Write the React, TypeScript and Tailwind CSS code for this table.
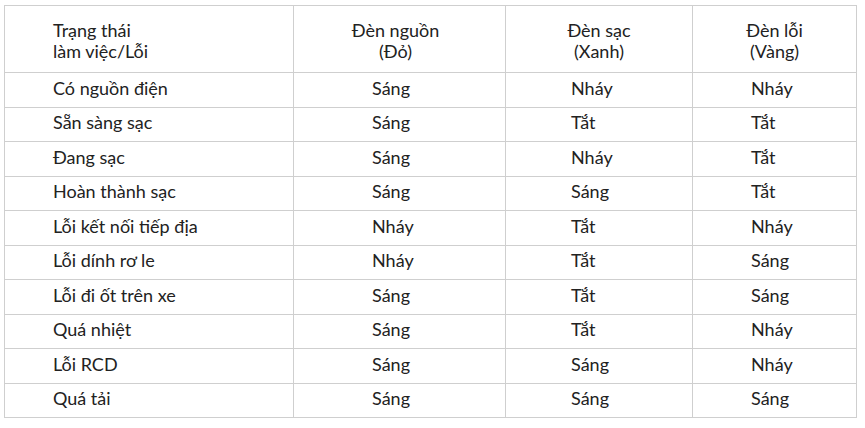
const rows: [string, string, string, string][] = [
  ['Có nguồn điện', 'Sáng', 'Nháy', 'Nháy'],
  ['Sẵn sàng sạc', 'Sáng', 'Tắt', 'Tắt'],
  ['Đang sạc', 'Sáng', 'Nháy', 'Tắt'],
  ['Hoàn thành sạc', 'Sáng', 'Sáng', 'Tắt'],
  ['Lỗi kết nối tiếp địa', 'Nháy', 'Tắt', 'Nháy'],
  ['Lỗi dính rơ le', 'Nháy', 'Tắt', 'Sáng'],
  ['Lỗi đi ốt trên xe', 'Sáng', 'Tắt', 'Sáng'],
  ['Quá nhiệt', 'Sáng', 'Tắt', 'Nháy'],
  ['Lỗi RCD', 'Sáng', 'Sáng', 'Nháy'],
  ['Quá tải', 'Sáng', 'Sáng', 'Sáng'],
];

export default function App() {
  return (
    <div className="w-[865px] h-[428px] bg-white pt-[5px] pl-[4px] font-['Lato',sans-serif] text-[18px] text-[#222]">
      <table className="table-fixed border-collapse w-[852px]">
        <colgroup>
          <col className="w-[289px]" />
          <col className="w-[212px]" />
          <col className="w-[187px]" />
          <col className="w-[164px]" />
        </colgroup>
        <thead>
          <tr className="h-[67px]">
            <th className="border border-[#cfcfcf] font-normal text-left leading-[21px] pl-[48px] pt-[4px]">
              Trạng thái
              <br />
              làm việc/Lỗi
            </th>
            <th className="border border-[#cfcfcf] font-normal text-center leading-[21px] pr-[8px] pt-[4px]">
              Đèn nguồn
              <br />
              (Đỏ)
            </th>
            <th className="border border-[#cfcfcf] font-normal text-center leading-[21px] pt-[4px]">
              Đèn sạc
              <br />
              (Xanh)
            </th>
            <th className="border border-[#cfcfcf] font-normal text-center leading-[21px] pt-[4px]">
              Đèn lỗi
              <br />
              (Vàng)
            </th>
          </tr>
        </thead>
        <tbody>
          {rows.map((r) => (
            <tr key={r[0]} className="h-[34.5px]">
              <td className="border border-[#cfcfcf] pl-[48px] pb-[4px] leading-[22px]">{r[0]}</td>
              <td className="border border-[#cfcfcf] pl-[78px] pb-[4px] leading-[22px]">{r[1]}</td>
              <td className="border border-[#cfcfcf] pl-[65px] pb-[4px] leading-[22px]">{r[2]}</td>
              <td className="border border-[#cfcfcf] pl-[58px] pb-[4px] leading-[22px]">{r[3]}</td>
            </tr>
          ))}
        </tbody>
      </table>
    </div>
  );
}
